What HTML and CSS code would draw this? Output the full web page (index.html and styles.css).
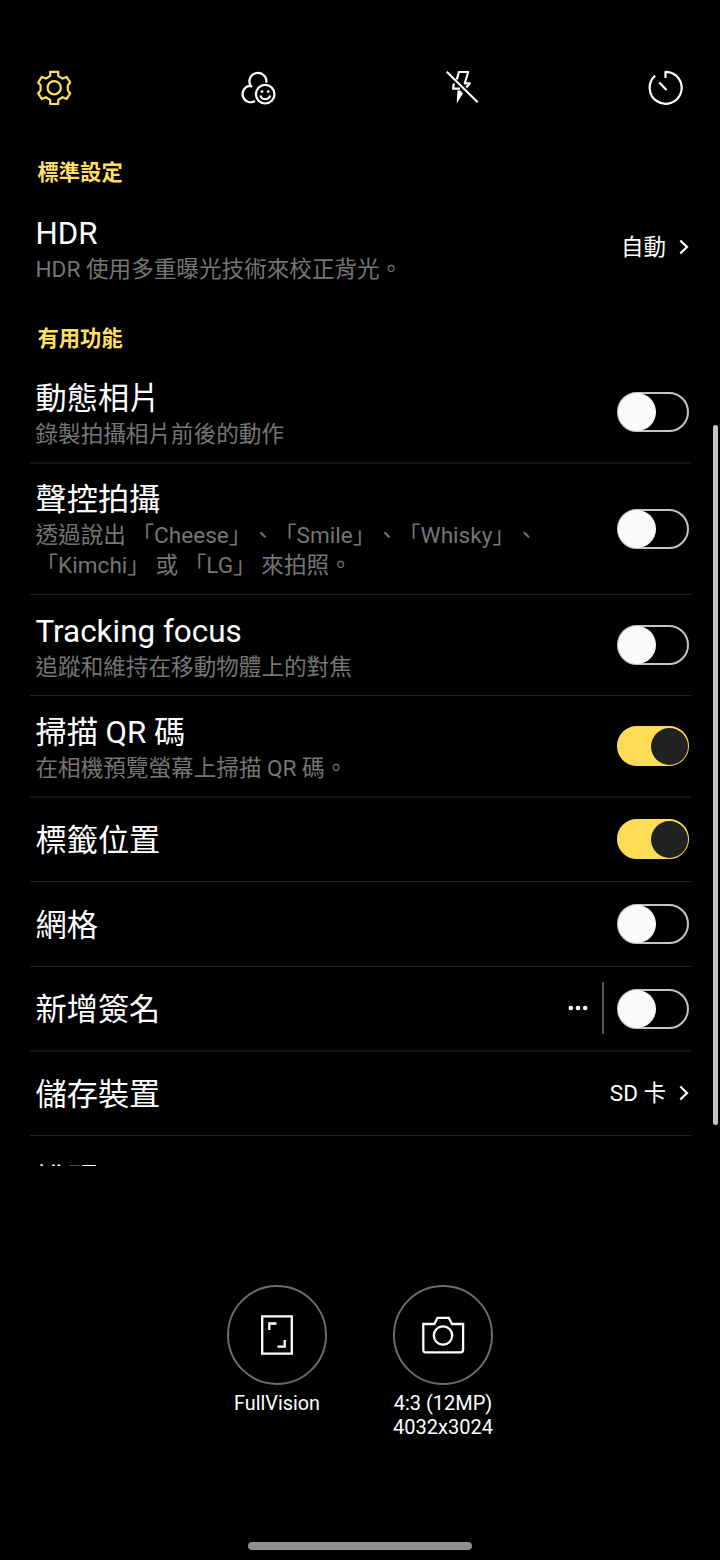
FILE: index.html
```html
<!DOCTYPE html>
<html lang="zh-Hant">
<head>
<meta charset="utf-8">
<title>相機設定</title>
<link rel="stylesheet" href="styles.css">
</head>
<body>
<div class="screen">
  <header class="toolbar">
    <svg class="tool tool-active" viewBox="0 0 36 36"><path d="M14.200 1.800h8v4.100l4.300 2.700 4.100-1.700 3.600 5.600-2.400 2.900v5l2.400 2.900-3.600 5.600-4.100-1.700-4.300 2.700v4.100h-8v-4.100l-4.300-2.700-4.100 1.700-3.600-5.600 2.400-2.900v-5l-2.400-2.900 3.600-5.600 4.100 1.700 4.300-2.700z"/><circle cx="18.200" cy="17.700" r="6.600"/></svg>
    <svg class="tool" viewBox="0 0 36 36"><path d="M11.800 17.300A8.500 8.500 0 1 1 26.300 12.800"/><path d="M10.300 15.800A8.200 8.200 0 1 0 15 31"/><circle cx="25.200" cy="24.200" r="9.300"/><path d="M20.300 25.500a5.100 5.100 0 0 0 9.800 0"/><circle class="dot" cx="22" cy="21.600" r="1.400"/><circle class="dot" cx="28.200" cy="21.600" r="1.400"/></svg>
    <svg class="tool" viewBox="0 0 36 36"><path d="M12.800 9.500l2.100-7.500h9.300l-3.400 11.300h5l-3.500 4.200M9.800 13.300l-.7 5.300h7"/><path d="M13.400 20.500h3l2.600 3-6.300 10z" class="dot"/><path d="M2.700 1.700l31 30.600"/></svg>
    <svg class="tool" viewBox="0 0 36 36"><path d="M7.200 5.700A16 16 0 1 0 17.500 1.800v6.200M11.300 12.400l7.200 7.500"/></svg>
  </header>

  <main class="settings">
    <h2 class="section section-first">標準設定</h2>
    <div class="row row-hdr">
      <div class="text"><div class="title">HDR</div><div class="desc">HDR 使用多重曝光技術來校正背光。</div></div>
      <div class="value">自動<svg class="chevron" viewBox="0 0 10 16"><path d="M1.300 1.500L8 8l-6.700 6.500"/></svg></div>
    </div>
    <h2 class="section section-second">有用功能</h2>
    <div class="row row-soft row-motion">
      <div class="text"><div class="title">動態相片</div><div class="desc">錄製拍攝相片前後的動作</div></div>
      <span class="switch"></span>
    </div>
    <div class="row row-voice">
      <div class="text"><div class="title">聲控拍攝</div><div class="desc">透過說出 「Cheese」、「Smile」、「Whisky」、<br>「Kimchi」 或 「LG」 來拍照。</div></div>
      <span class="switch"></span>
    </div>
    <div class="row row-tracking">
      <div class="text text-low"><div class="title title-latin">Tracking focus</div><div class="desc">追蹤和維持在移動物體上的對焦</div></div>
      <span class="switch"></span>
    </div>
    <div class="row row-soft row-qr">
      <div class="text text-low"><div class="title">掃描 QR 碼</div><div class="desc">在相機預覽螢幕上掃描 QR 碼。</div></div>
      <span class="switch switch-on"></span>
    </div>
    <div class="row row-location">
      <div class="title title-single">標籤位置</div>
      <span class="switch switch-on"></span>
    </div>
    <div class="row row-single">
      <div class="title title-single">網格</div>
      <span class="switch"></span>
    </div>
    <div class="row row-soft row-single">
      <div class="title title-single">新增簽名</div>
      <div class="controls">
        <svg class="more" viewBox="0 0 20 6"><circle cx="2.800" cy="3" r="2.300"/><circle cx="10" cy="3" r="2.300"/><circle cx="17.200" cy="3" r="2.300"/></svg>
        <span class="divider"></span>
        <span class="switch"></span>
      </div>
    </div>
    <div class="row row-location">
      <div class="title title-single">儲存裝置</div>
      <div class="value">SD 卡<svg class="chevron" viewBox="0 0 10 16"><path d="M1.300 1.500L8 8l-6.700 6.500"/></svg></div>
    </div>
    <div class="row row-single">
      <div class="title title-single">說明</div>
    </div>
    <span class="scrollbar"></span>
  </main>

  <section class="modes">
    <div class="mode">
      <span class="ring"><svg class="mode-icon" viewBox="0 0 44 44"><path d="M7.200 3.300h29.600v37.400H7.200zM14.300 17v-6.500h7.200M29.700 27v6.700h-7.200"/></svg></span>
      <span class="mode-label">FullVision</span>
    </div>
    <div class="mode">
      <span class="ring"><svg class="mode-icon" viewBox="0 0 44 44"><path d="M2.300 11h11l3.200-6.200h11.200l3.400 6.200h11v25.800a2.500 2.500 0 0 1-2.500 2.500H4.800a2.500 2.500 0 0 1-2.500-2.500z"/><circle cx="22" cy="22.500" r="9.200"/></svg></span>
      <span>4:3 (12MP)<br>4032x3024</span>
    </div>
  </section>
  <div class="home-bar"></div>
</div>
</body>
</html>
```

FILE: styles.css
```css
* { box-sizing: border-box; }
body {
  margin: 0;
  background: #000;
  color: #fff;
  font-family: Roboto, "Noto Sans CJK TC", sans-serif;
  text-spacing-trim: space-all;
}
.screen {
  display: flex;
  flex-direction: column;
  width: 720px;
  height: 1560px;
  overflow: hidden;
}
.toolbar {
  display: flex;
  justify-content: space-between;
  height: 155px;
  padding: 70px 36px 0;
  flex: none;
}
.tool {
  width: 36px;
  height: 36px;
  fill: none;
  stroke: #fff;
  stroke-width: 2.2;
  stroke-linejoin: round;
}
.tool-active { stroke: #ffdf5e; }
.dot { fill: #fff; stroke: none; }
.settings {
  position: relative;
  height: 1011px;
  padding: 0 29px 0 30px;
  overflow: hidden;
  flex: none;
}
.section {
  margin: 0;
  padding-left: 7.500px;
  color: #ffdf62;
  font-size: 21.300px;
  font-weight: 600;
  line-height: 30px;
}
.section-first { padding-top: 3px; height: 42px; }
.section-second { padding-top: 27px; height: 66px; }
.row {
  display: flex;
  align-items: center;
  justify-content: space-between;
  padding: 0 2px 0 5.500px;
  border-bottom: 1px solid #222;
}
.row-soft { border-bottom: 2px solid #141414; }
.row-hdr { height: 100px; border: 0; }
.row-motion { height: 101px; }
.row-voice { height: 131px; }
.row-tracking { height: 101px; }
.row-qr { height: 102px; }
.row-location { height: 84px; }
.row-single { height: 85px; }
.text { padding-top: 2px; }
.text-low { padding-top: 4px; }
.row-hdr .text { padding-top: 4px; }
.title { font-size: 31.200px; line-height: 42px; white-space: nowrap; }
.title-latin { font-size: 31.400px; }
.title-single { padding-top: 3px; }
.desc { color: #757575; font-size: 22.600px; line-height: 30px; white-space: nowrap; }
.value {
  display: flex;
  align-items: center;
  gap: 12.500px;
  margin: -1px .500px 0 0;
  font-size: 22.500px;
  line-height: 30px;
}
.chevron {
  width: 10px;
  height: 16px;
  fill: none;
  stroke: #fff;
  stroke-width: 2.2;
}
.switch {
  display: flex;
  width: 72px;
  height: 40px;
  border: 2px solid #c4c4c4;
  border-radius: 20px;
  flex: none;
}
.row-motion .switch { margin-top: -1px; }
.switch::before {
  content: "";
  width: 38px;
  height: 38px;
  margin: -1px;
  border-radius: 50%;
  background: #fafafa;
}
.switch-on {
  justify-content: flex-end;
  border-color: #ffdc55;
  background: #ffdc55;
}
.switch-on::before { width: 37px; height: 37px; margin: -.500px; background: #222; }
.row-location .switch { margin-top: -1px; }
.controls { display: flex; align-items: center; }
.more { width: 20px; height: 6px; margin-top: -2px; fill: #fff; }
.divider { width: 2px; height: 52px; margin: -1px 13px 0 14px; background: #555; }
.scrollbar {
  position: absolute;
  top: 270px;
  right: 2px;
  width: 5px;
  height: 700px;
  border-radius: 3px;
  background: #c4c4c4;
}
.modes {
  display: flex;
  justify-content: center;
  gap: 46px;
  height: 376px;
  padding-top: 119px;
  flex: none;
}
.mode {
  display: flex;
  flex-direction: column;
  align-items: center;
  gap: 6px;
  width: 120px;
  font-size: 20px;
  line-height: 24px;
  text-align: center;
}
.mode-label { padding-top: 1px; font-size: 19.800px; }
.ring {
  display: grid;
  place-items: center;
  width: 100px;
  height: 100px;
  border: 2px solid #6c6c6c;
  border-radius: 50%;
}
.mode-icon {
  width: 44px;
  height: 44px;
  fill: none;
  stroke: #fff;
  stroke-width: 2.300;
}
.home-bar {
  width: 224px;
  height: 8px;
  border-radius: 4px;
  background: #8f8f8f;
  align-self: center;
}
```
